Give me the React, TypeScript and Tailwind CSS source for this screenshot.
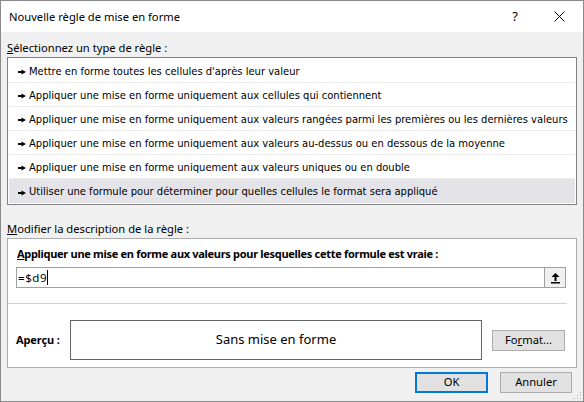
import React from "react";

const rows = [
  "Mettre en forme toutes les cellules d'après leur valeur",
  "Appliquer une mise en forme uniquement aux cellules qui contiennent",
  "Appliquer une mise en forme uniquement aux valeurs rangées parmi les premières ou les dernières valeurs",
  "Appliquer une mise en forme uniquement aux valeurs au-dessus ou en dessous de la moyenne",
  "Appliquer une mise en forme uniquement aux valeurs uniques ou en double",
  "Utiliser une formule pour déterminer pour quelles cellules le format sera appliqué",
];

function Arrow() {
  return (
    <svg width="8" height="6" viewBox="0 0 8 6" className="shrink-0">
      <rect x="0" y="2" width="4" height="2" fill="#000" />
      <polygon points="3.5,0.5 8,3 3.5,5.5" fill="#000" />
    </svg>
  );
}

export default function App() {
  return (
    <div className="w-[584px] h-[402px] border border-[#8a8a8a] bg-[#f0f0f0] flex flex-col font-['Noto_Sans',sans-serif] text-[11.2px] text-black relative overflow-hidden">
      {/* Title bar */}
      <div className="h-[31px] bg-white flex items-center shrink-0">
        <div className="pl-2 flex-1 text-[11.2px] leading-none">Nouvelle règle de mise en forme</div>
        <div className="w-[20px] text-center text-[13px] mr-[29px]">?</div>
        <svg width="11" height="11" viewBox="0 0 11 11" className="mr-[18px]">
          <path d="M0.5 0.5L10.5 10.5M10.5 0.5L0.5 10.5" stroke="#000" strokeWidth="1" />
        </svg>
      </div>

      {/* Body */}
      <div className="flex flex-col px-[6px]">
        <div className="pt-[8px] leading-[16px] h-[25px] whitespace-nowrap">
          <span className="underline">S</span>électionnez un type de règle :
        </div>
        <div className="h-[148px] border border-[#828282] bg-white p-px flex flex-col font-['DejaVu_Sans_Condensed','DejaVu_Sans',sans-serif] text-[11.1px]">
          {rows.map((r, i) => (
            <div
              key={i}
              className={
                "h-[24px] flex items-center gap-[3px] pl-[9px] pt-[3px] whitespace-nowrap " +
                (i === 5 ? "bg-[#e3e3e8]" : "border-b border-[#ececec]")
              }
            >
              <Arrow />
              <span>{r}</span>
            </div>
          ))}
        </div>

        <div className="mt-[16px] leading-[16px] h-[17px] whitespace-nowrap">
          <span className="underline">M</span>odifier la description de la règle :
        </div>

        <div className="h-[130px] border border-[#adadad] bg-white flex flex-col">
          <div className="pt-[7px] pl-[9px] leading-[16px] font-bold text-[11px] tracking-[-0.3px] whitespace-nowrap">
            <span className="underline">A</span>ppliquer une mise en forme aux valeurs pour lesquelles cette formule est vraie :
          </div>
          <div className="mt-[5px] ml-[8px] mr-[10px] h-[21px] border border-[#a0a0a0] flex items-center">
            <div className="flex-1 pl-[1px] text-[11.5px] tracking-[0.6px] flex items-center">
              =$d9<span className="inline-block w-px h-[15px] bg-black" />
            </div>
            <div className="w-[21px] h-[19px] border-l border-[#a0a0a0] bg-[#f0f0f0] flex items-center justify-center">
              <svg width="11" height="12" viewBox="0 0 11 12">
                <path d="M5.5 1L1.5 5H4.5V9H6.5V5H9.5Z" fill="#000" />
                <rect x="1" y="10" width="9" height="1.5" fill="#000" />
              </svg>
            </div>
          </div>
          <div className="mt-[15px] ml-[0px] mr-[9px] h-px bg-[#d0d0d0]" />
          <div className="flex items-center mt-[16px] ml-[8px]">
            <div className="w-[54px] font-bold text-[11px] tracking-[-0.1px]">Aperçu :</div>
            <div className="w-[412px] h-[40px] border border-[#646464] flex items-center justify-center text-[13px]">
              Sans mise en forme
            </div>
            <div className="ml-[10px] w-[73px] h-[21px] border border-[#adadad] bg-[#e1e1e1] flex items-center justify-center">
              Fo<span className="underline">r</span>mat...
            </div>
          </div>
        </div>

        <div className="flex justify-end mt-[4px] pr-[5px] gap-[12px]">
          <div className="w-[73px] h-[21px] border-2 border-[#0078d7] bg-[#e1e1e1] flex items-center justify-center">
            OK
          </div>
          <div className="w-[72px] h-[21px] border border-[#adadad] bg-[#e1e1e1] flex items-center justify-center">
            Annuler
          </div>
        </div>
      </div>

      {/* resize grip */}
      <svg width="10" height="10" viewBox="0 0 10 10" className="absolute right-[1px] bottom-[1px]">
        <rect x="8" y="2" width="1" height="1" fill="#b0b0b0" />
        <rect x="5" y="5" width="1" height="1" fill="#b0b0b0" />
        <rect x="8" y="5" width="1" height="1" fill="#b0b0b0" />
        <rect x="2" y="8" width="1" height="1" fill="#b0b0b0" />
        <rect x="5" y="8" width="1" height="1" fill="#b0b0b0" />
        <rect x="8" y="8" width="1" height="1" fill="#b0b0b0" />
      </svg>
    </div>
  );
}
